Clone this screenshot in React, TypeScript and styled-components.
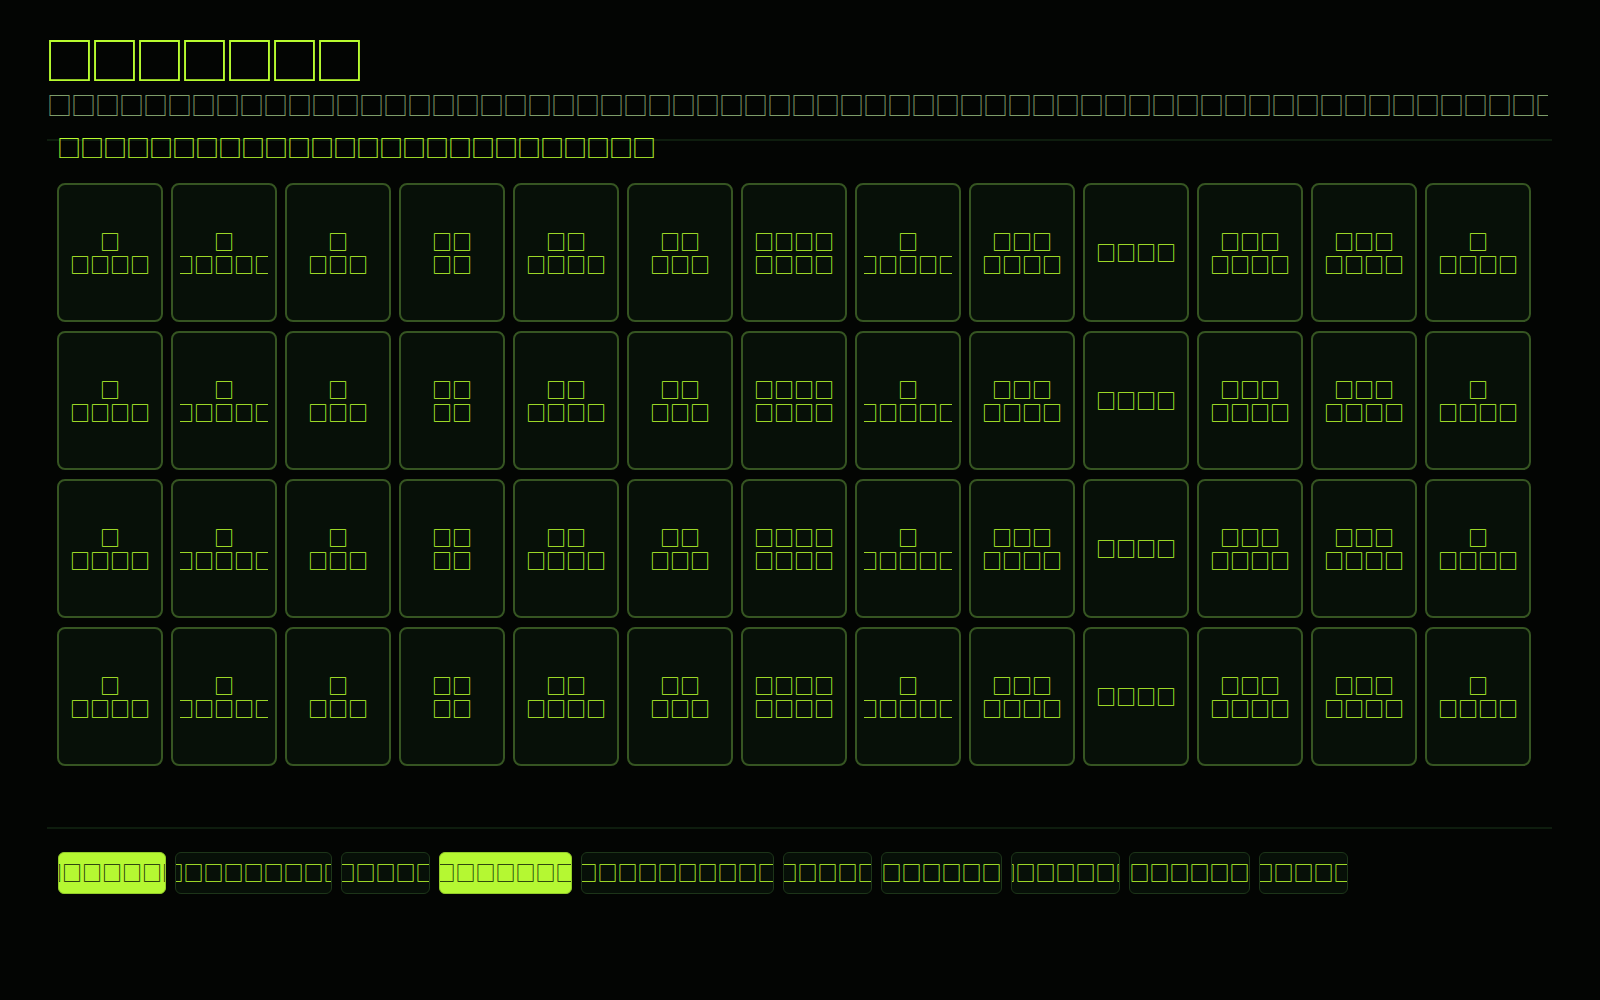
import styled, { createGlobalStyle, css } from 'styled-components'

const lime = '#b8fc2f'
const box = '\u25A1'

const GlobalStyle = createGlobalStyle`
  html, body {
    margin: 0;
    background: #030503;
  }
  body {
    min-height: 100vh;
    font-family: 'Noto Sans CJK SC', 'Noto Sans', sans-serif;
  }
`

const Page = styled.main`
  padding: 33px 48px 40px 47px;
`

const Title = styled.h1`
  margin: 0 0 0 -3px;
  font-size: 51px;
  line-height: 51px;
  letter-spacing: -6px;
  font-weight: 400;
  color: ${lime};
  white-space: nowrap;
`

const Subtitle = styled.p`
  margin: 5px 0 0;
  max-width: 1501px;
  overflow: hidden;
  white-space: nowrap;
  font-size: 25px;
  line-height: 30px;
  letter-spacing: -1px;
  color: #7d9c69;
`

const Deck = styled.section`
  margin-top: 20px;
  border-top: 2px solid #0e1d0e;
  padding: 0 10px;
`

const DeckTitle = styled.h2`
  margin: 0;
  font-size: 24px;
  line-height: 12px;
  letter-spacing: -1px;
  font-weight: 400;
  color: ${lime};
  white-space: nowrap;
`

const CardGrid = styled.div`
  margin-top: 30px;
  display: flex;
  flex-wrap: wrap;
  gap: 9px 8px;
`

const Card = styled.div`
  box-sizing: border-box;
  width: 106px;
  height: 139px;
  padding: 0 7px;
  display: flex;
  align-items: center;
  background: #071008;
  border: 2px solid #365522;
  border-radius: 8px;
`

const Face = styled.div`
  width: 100%;
  overflow: hidden;
  display: flex;
  flex-direction: column;
  align-items: center;
  font-size: 20px;
  line-height: 23px;
  color: ${lime};
`

const FaceLine = styled.span`
  white-space: nowrap;
`

const Footer = styled.footer`
  margin-top: 61px;
  border-top: 2px solid #0e1d0e;
  padding: 23px 11px 0;
`

const ButtonRow = styled.div`
  display: flex;
  gap: 9px;
`

const ChipButton = styled.button<{ $w: number; $active?: boolean }>`
  box-sizing: border-box;
  width: ${({ $w }) => $w}px;
  height: 42px;
  padding: 0;
  display: flex;
  align-items: center;
  justify-content: center;
  overflow: hidden;
  font-family: inherit;
  font-size: 20px;
  line-height: 20px;
  border-radius: 6px;
  border: 1px solid #1d3519;
  background: #071008;
  color: ${lime};
  cursor: pointer;

  ${({ $active }) =>
    $active &&
    css`
      background: #b5f832;
      border-color: #93cc2a;
      color: #0b1406;
    `}
`

const ChipLabel = styled.span`
  white-space: nowrap;
`

// glyph counts per card face: top line / bottom line
const faces: Array<Array<number>> = [
  [1, 4],
  [1, 5],
  [1, 3],
  [2, 2],
  [2, 4],
  [2, 3],
  [4, 4],
  [1, 5],
  [3, 4],
  [4],
  [3, 4],
  [3, 4],
  [1, 4],
]

const chips = [
  { w: 108, n: 7, active: true },
  { w: 157, n: 9 },
  { w: 89, n: 5 },
  { w: 133, n: 7, active: true },
  { w: 193, n: 10 },
  { w: 89, n: 5 },
  { w: 121, n: 6 },
  { w: 109, n: 7 },
  { w: 121, n: 6 },
  { w: 89, n: 5 },
]

const glyphs = (n: number) => box.repeat(n)

export default function App() {
  return (
    <>
      <GlobalStyle />
      <Page>
        <Title>{glyphs(7)}</Title>
        <Subtitle>{glyphs(72)}</Subtitle>

        <Deck>
          <DeckTitle>{glyphs(26)}</DeckTitle>
          <CardGrid>
            {[0, 1, 2, 3].map((row) =>
              faces.map((lines, col) => (
                <Card key={`${row}-${col}`}>
                  <Face>
                    {lines.map((n, i) => (
                      <FaceLine key={i}>{glyphs(n)}</FaceLine>
                    ))}
                  </Face>
                </Card>
              ))
            )}
          </CardGrid>
        </Deck>

        <Footer>
          <ButtonRow>
            {chips.map((chip, i) => (
              <ChipButton key={i} $w={chip.w} $active={chip.active}>
                <ChipLabel>{glyphs(chip.n)}</ChipLabel>
              </ChipButton>
            ))}
          </ButtonRow>
        </Footer>
      </Page>
    </>
  )
}
